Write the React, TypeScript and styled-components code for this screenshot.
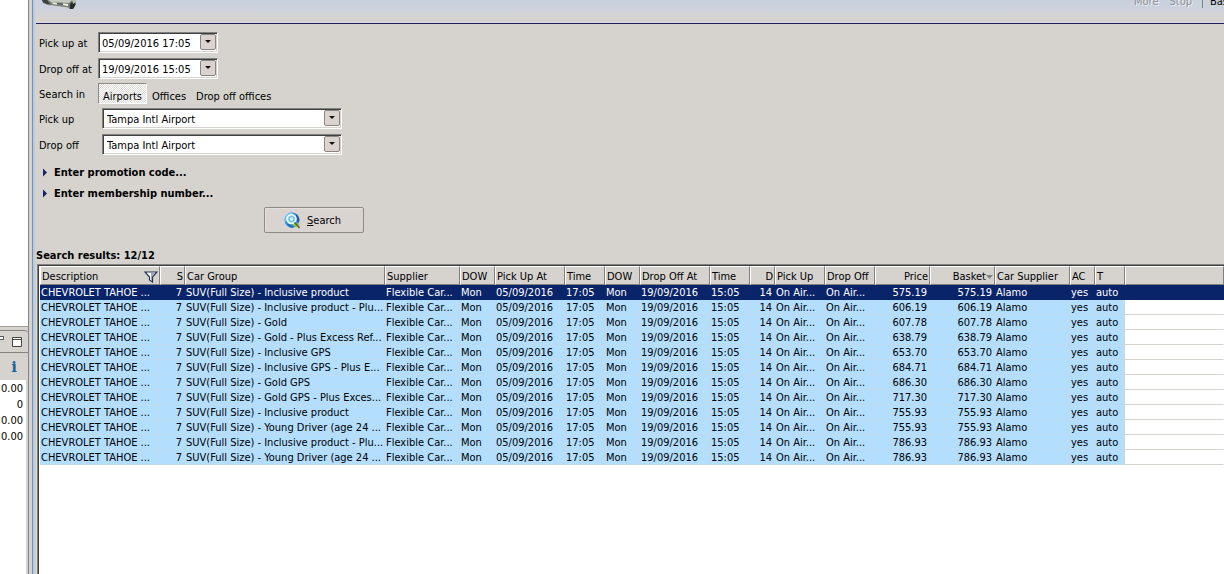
import React from "react";
import styled, { createGlobalStyle } from "styled-components";

const GlobalStyle = createGlobalStyle`
  *, *::before, *::after { box-sizing: border-box; }
  html, body, #root { height: 100%; }
  body {
    margin: 0;
    overflow: hidden;
    background: #d6d3ce;
    color: #000;
    font: 11px/15px "DejaVu Sans Condensed", Tahoma, "DejaVu Sans", sans-serif;
  }
  button, input, select { font: inherit; color: inherit; }
`;

const Shell = styled.div`
  display: flex;
  height: 100%;
  overflow: hidden;
`;

const Sidebar = styled.aside`
  display: flex;
  flex-direction: column;
  flex: 0 0 29px;
  overflow: hidden;
  border-right: 1px solid #858381;
`;

const EmptyView = styled.div`
  flex: 0 0 327px;
  background: #fff;
  border-bottom: 1px solid #a09d99;
`;

const Totals = styled.section`
  display: flex;
  flex-direction: column;
  flex: 1;
  margin-top: 3px;
  border-top: 1px solid #858381;
  border-top-right-radius: 4px;
`;

const SideBar = styled.div<{ $height: number; $ruled?: boolean }>`
  display: flex;
  align-items: center;
  justify-content: flex-end;
  gap: 8px;
  flex: 0 0 ${(p) => p.$height}px;
  padding-right: 6px;
  border-bottom: ${(p) => (p.$ruled ? "1px solid #858381" : "0")};
`;

const PlainIconButton = styled.button`
  display: flex;
  flex: none;
  padding: 0;
  border: 0;
  background: none;
`;

const InfoButton = styled(PlainIconButton)`
  color: #17659c;
  font: bold 15px/18px "DejaVu Serif", "Liberation Serif", serif;
  padding-right: 5px;
`;

const TotalsList = styled.ul`
  flex: 1;
  margin: 0 2px 0 0;
  padding: 1px 3px 0 0;
  list-style: none;
  background: #fff;
  line-height: 16px;
`;

const TotalsItem = styled.li`
  display: flex;
  justify-content: flex-end;
`;

const Main = styled.main`
  display: flex;
  flex-direction: column;
  flex: 1;
  min-width: 0;
  margin-left: 3px;
  border-left: 1px solid #6d93bd;
  box-shadow: inset 2px 0 0 #b9cae2;
  padding-left: 3px;
`;

const Banner = styled.header`
  display: flex;
  justify-content: space-between;
  flex: 0 0 24px;
  overflow: hidden;
  background: linear-gradient(#c9d1de, #cdd2db 45%, #d6d3d1 75%, #d6d3ce);
  border-bottom: 1px solid #1f1d56;
  box-shadow: inset 0 -1px 0 #dcd8e6;
`;

const BannerTools = styled.nav`
  display: flex;
  align-items: flex-start;
  flex: none;
  gap: 11px;
  width: 90px;
  margin-top: -6px;
  white-space: nowrap;
`;

const ToolButton = styled.button`
  flex: none;
  padding: 0;
  border: 0;
  background: none;
  &:disabled {
    color: #8e9095;
    text-shadow: 1px 1px 0 #eef0f4;
  }
`;

const ToolDivider = styled.span`
  flex: none;
  width: 1px;
  height: 14px;
  margin: 0 -4px 0 -1px;
  background: #858381;
`;

const SearchForm = styled.form`
  display: flex;
  flex-direction: column;
  padding: 5px 0 0 3px;
`;

const Field = styled.div<{ $height: number }>`
  display: flex;
  align-items: center;
  height: ${(p) => p.$height}px;
`;

const Label = styled.label`
  flex: 0 0 59px;
  padding-top: 2px;
  white-space: nowrap;
`;

const Sunken = styled.div<{ $width: number; $indent?: number }>`
  display: flex;
  width: ${(p) => p.$width}px;
  height: 21px;
  margin-left: ${(p) => p.$indent ?? 0}px;
  background: #fff;
  border: 1px solid;
  border-color: #808080 #fff #fff #808080;
  box-shadow: inset 1px 1px 0 #404040, inset -1px -1px 0 #d6d3ce;
`;

const TextBox = styled.input`
  flex: 1;
  min-width: 0;
  padding: 2px 0 0 3px;
  border: 0;
  background: none;
  outline: 0;
`;

const Chooser = styled.select`
  flex: 1;
  min-width: 0;
  padding: 2px 0 0 4px;
  border: 0;
  background: none;
  outline: 0;
  appearance: none;
`;

const ArrowButton = styled.button`
  display: flex;
  align-items: center;
  justify-content: center;
  flex: 0 0 16px;
  height: 16px;
  margin: 1px 1px 0 0;
  padding: 0;
  border: 1px solid #8b8581;
  border-radius: 2px;
  background: #dbd3d0;
`;

const Toggle = styled.button<{ $on?: boolean }>`
  height: 21px;
  padding: 5px 4px 0;
  border: 1px solid;
  border-color: ${(p) => (p.$on ? "#8b8987 #fff #fff #8b8987" : "transparent")};
  background: ${(p) =>
    p.$on ? "repeating-conic-gradient(#fff 0 25%, #dedbd7 0 50%) 0 0 / 2px 2px" : "none"};
  white-space: nowrap;
`;

const Expander = styled.button`
  display: flex;
  align-items: center;
  align-self: flex-start;
  gap: 6px;
  height: 21px;
  padding: 0 0 0 3px;
  border: 0;
  background: none;
  font-weight: bold;
`;

const Expanders = styled.div`
  display: flex;
  flex-direction: column;
  padding-top: 5px;
`;

const SubmitButton = styled.button`
  display: flex;
  align-items: center;
  justify-content: center;
  gap: 6px;
  width: 100px;
  height: 26px;
  margin: 3px 0 0 225px;
  padding: 0 3px 0 0;
  border: 1px solid #8f8a87;
  border-radius: 2px;
  background: #dad4d1;
  box-shadow: inset 1px 1px 0 #e6e1de;
`;

const ResultsTitle = styled.h2`
  margin: 15px 0 1px;
  font-size: 11px;
  line-height: 15px;
`;

const ResultsFrame = styled.div`
  flex: 1;
  min-height: 0;
  margin-left: 1px;
  overflow: hidden;
  background: #fff;
  border: solid #808080;
  border-width: 1px 0 0 1px;
  box-shadow: inset 1px 1px 0 #404040;
  padding: 1px 0 0 2px;
`;

const Results = styled.table`
  width: 100%;
  table-layout: fixed;
  border-collapse: separate;
  border-spacing: 0;
`;

const HeadCell = styled.th<{ $right?: boolean }>`
  height: 19px;
  padding: 2px 1px 0;
  overflow: hidden;
  background: #d6d3ce;
  border: 1px solid;
  border-color: #fff #808080 #808080 #fff;
  font-weight: normal;
  line-height: 15px;
  text-align: ${(p) => (p.$right ? "right" : "left")};
  white-space: nowrap;
`;

const HeadContent = styled.span<{ $spread?: boolean; $right?: boolean }>`
  display: flex;
  align-items: center;
  justify-content: ${(p) => (p.$spread ? "space-between" : p.$right ? "flex-end" : "flex-start")};
`;

const Cell = styled.td<{ $right?: boolean; $blank?: boolean }>`
  height: 15px;
  padding: 2px 2px 0 1px;
  overflow: hidden;
  background: ${(p) => (p.$blank ? "#fff" : "#b3defe")};
  border-bottom: 1px solid ${(p) => (p.$blank ? "#d6d3ce" : "#bddaf0")};
  border-right: 1px solid ${(p) => (p.$blank ? "transparent" : "#bddaf0")};
  line-height: 12px;
  text-align: ${(p) => (p.$right ? "right" : "left")};
  white-space: nowrap;
`;

const Row = styled.tr<{ $selected?: boolean }>`
  ${(p) =>
    p.$selected &&
    `color: #fff; & > td { background: #0a246a; border-color: #0a246a; }`}
`;

const DropArrow = () => (
  <svg width="6" height="3" viewBox="0 0 6 3" aria-hidden="true">
    <path d="M0 0h6L3 3z" fill="#111" />
  </svg>
);

const ExpandArrow = () => (
  <svg width="6" height="9" viewBox="0 0 6 9" aria-hidden="true">
    <path d="M1 0.5L5 4.5L1 8.5z" fill="#12246b" />
  </svg>
);

const FilterIcon = () => (
  <svg width="14" height="12" viewBox="0 0 14 12" aria-hidden="true">
    <path d="M1 1h12L8.5 6v5L5.5 9V6z" fill="#fff" stroke="#22324e" strokeWidth="1.2" />
    <path d="M7 2h4L8 5.5v4L7 9z" fill="#9cabc0" />
  </svg>
);

const SortIcon = () => (
  <svg width="7" height="4" viewBox="0 0 7 4" aria-hidden="true">
    <path d="M0 0h7L3.5 4z" fill="#858381" />
  </svg>
);

const MinimizeIcon = () => (
  <svg width="10" height="11" viewBox="0 0 10 11" aria-hidden="true">
    <path d="M0.5 0.5h9v3h-9z" fill="#fff" stroke="#555" />
  </svg>
);

const MaximizeIcon = () => (
  <svg width="10" height="10" viewBox="0 0 10 10" aria-hidden="true">
    <path d="M0.5 0.5h9v9h-9z" fill="#fff" stroke="#444" />
    <path d="M0 2.5h10" stroke="#444" />
  </svg>
);

const CarIcon = () => (
  <svg width="44" height="10" viewBox="0 0 44 10" aria-hidden="true">
    <path d="M6 0h34v5l-2 1-1 3-3 0-2-1-14-2-6-1-5-2z" fill="#777c79" />
    <path d="M6 0h5l3 4-3 0-4-2z" fill="#3a3f40" />
    <path d="M12 0h24l-3 3-18-1z" fill="#c4cabd" />
    <path d="M15 2l17 2v2L16 4z" fill="#a9afa6" />
    <path d="M17 2.5l4 .5v1.5L17 4zM27 3.5l5 .5v2l-5-1z" fill="#eef0d6" />
    <path d="M21 3l6 .5V5l-6-.7z" fill="#4c5254" />
    <path d="M14 5l18 2.5V8.500L15 6z" fill="#d3d6cf" />
    <path d="M34 4l3-3 2 0v5l-2 3h-3z" fill="#25292b" />
    <path d="M36 0h4v2l-3 2z" fill="#b7bda9" />
  </svg>
);

const GlobeSearchIcon = () => (
  <svg width="17" height="17" viewBox="0 0 17 17" aria-hidden="true">
    <circle cx="8" cy="8" r="7.5" fill="#2f8fd8" />
    <path d="M1 6C2 2 6 0 9 1L6 4 3 9 1 10z" fill="#6cc4f2" />
    <path d="M12 2c3 2 4 5 3 8l-3-1-1-4z" fill="#1760b4" />
    <path d="M3 12l4 1 3 3c-3 0-6-1-7-4z" fill="#1c6cbc" />
    <circle cx="7.500" cy="7" r="4.500" fill="#a8dcec" stroke="#f2fbff" strokeWidth="1.600" />
    <circle cx="7.500" cy="7" r="2.500" fill="#c9eef6" stroke="#58b0cf" />
    <path d="M8 13l3-2 5 1-2 3-3-1z" fill="#9ccb3b" />
    <path d="M10.5 10.5L15.5 16" stroke="#4b6a22" strokeWidth="1.6" />
  </svg>
);

type Column = { name: string; width?: number; right?: boolean; mark?: "filter" | "sort" };

const columns: Column[] = [
  { name: "Description", width: 120, mark: "filter" },
  { name: "S", width: 25, right: true },
  { name: "Car Group", width: 200 },
  { name: "Supplier", width: 75 },
  { name: "DOW", width: 35 },
  { name: "Pick Up At", width: 70 },
  { name: "Time", width: 40 },
  { name: "DOW", width: 35 },
  { name: "Drop Off At", width: 70 },
  { name: "Time", width: 40 },
  { name: "D", width: 25, right: true },
  { name: "Pick Up", width: 50 },
  { name: "Drop Off", width: 50 },
  { name: "Price", width: 55, right: true },
  { name: "Basket", width: 65, right: true, mark: "sort" },
  { name: "Car Supplier", width: 75 },
  { name: "AC", width: 25 },
  { name: "T", width: 30 },
  { name: "" },
];

const offers: [string, string][] = [
  ["Inclusive product", "575.19"],
  ["Inclusive product - Plu...", "606.19"],
  ["Gold", "607.78"],
  ["Gold - Plus Excess Ref...", "638.79"],
  ["Inclusive GPS", "653.70"],
  ["Inclusive GPS - Plus E...", "684.71"],
  ["Gold GPS", "686.30"],
  ["Gold GPS - Plus Exces...", "717.30"],
  ["Inclusive product", "755.93"],
  ["Young Driver (age 24 ...", "755.93"],
  ["Inclusive product - Plu...", "786.93"],
  ["Young Driver (age 24 ...", "786.93"],
];

const toCells = ([product, price]: [string, string]) => [
  "CHEVROLET TAHOE ...",
  "7",
  `SUV(Full Size) - ${product}`,
  "Flexible Car...",
  "Mon",
  "05/09/2016",
  "17:05",
  "Mon",
  "19/09/2016",
  "15:05",
  "14",
  "On Air...",
  "On Air...",
  price,
  price,
  "Alamo",
  "yes",
  "auto",
  "",
];

function DateField({ id, label, value }: { id: string; label: string; value: string }) {
  return (
    <Field $height={26}>
      <Label htmlFor={id}>{label}</Label>
      <Sunken $width={120}>
        <TextBox id={id} defaultValue={value} />
        <ArrowButton type="button" aria-label={`Choose ${label}`}>
          <DropArrow />
        </ArrowButton>
      </Sunken>
    </Field>
  );
}

function PlaceField({ id, label }: { id: string; label: string }) {
  return (
    <Field $height={26}>
      <Label htmlFor={id}>{label}</Label>
      <Sunken $width={240} $indent={4}>
        <Chooser id={id}>
          <option>Tampa Intl Airport</option>
        </Chooser>
        <ArrowButton as="span">
          <DropArrow />
        </ArrowButton>
      </Sunken>
    </Field>
  );
}

export default function App() {
  return (
    <>
      <GlobalStyle />
      <Shell>
        <Sidebar>
          <EmptyView />
          <Totals>
            <SideBar $height={22} $ruled>
              <PlainIconButton aria-label="Minimize">
                <MinimizeIcon />
              </PlainIconButton>
              <PlainIconButton aria-label="Maximize">
                <MaximizeIcon />
              </PlainIconButton>
            </SideBar>
            <SideBar $height={27}>
              <InfoButton>i</InfoButton>
            </SideBar>
            <TotalsList>
              {["0.00", "0", "0.00", "0.00"].map((total, i) => (
                <TotalsItem key={i}>{total}</TotalsItem>
              ))}
            </TotalsList>
          </Totals>
        </Sidebar>
        <Main>
          <Banner>
            <CarIcon />
            <BannerTools>
              <ToolButton disabled>More</ToolButton>
              <ToolButton disabled>Stop</ToolButton>
              <ToolDivider />
              <ToolButton>Basket</ToolButton>
            </BannerTools>
          </Banner>
          <SearchForm onSubmit={(e) => e.preventDefault()}>
            <DateField id="pickup-at" label="Pick up at" value="05/09/2016 17:05" />
            <DateField id="dropoff-at" label="Drop off at" value="19/09/2016 15:05" />
            <Field $height={24} role="group" aria-labelledby="search-in">
              <Label as="span" id="search-in">
                Search in
              </Label>
              <Toggle type="button" $on aria-pressed="true">
                Airports
              </Toggle>
              <Toggle type="button">Offices</Toggle>
              <Toggle type="button">Drop off offices</Toggle>
            </Field>
            <PlaceField id="pickup" label="Pick up" />
            <PlaceField id="dropoff" label="Drop off" />
            <Expanders>
              <Expander type="button">
                <ExpandArrow />
                Enter promotion code...
              </Expander>
              <Expander type="button">
                <ExpandArrow />
                Enter membership number...
              </Expander>
            </Expanders>
            <SubmitButton type="submit">
              <GlobeSearchIcon />
              <span>
                <u>S</u>earch
              </span>
            </SubmitButton>
          </SearchForm>
          <ResultsTitle>Search results: 12/12</ResultsTitle>
          <ResultsFrame>
            <Results>
              <colgroup>
                {columns.map((c, i) => (
                  <col key={i} width={c.width} />
                ))}
              </colgroup>
              <thead>
                <tr>
                  {columns.map((c, i) => (
                    <HeadCell key={i} $right={c.right}>
                      <HeadContent $spread={c.mark === "filter"} $right={c.right}>
                        {c.name}
                        {c.mark === "filter" && <FilterIcon />}
                        {c.mark === "sort" && <SortIcon />}
                      </HeadContent>
                    </HeadCell>
                  ))}
                </tr>
              </thead>
              <tbody>
                {offers.map((offer, r) => (
                  <Row key={r} $selected={r === 0}>
                    {toCells(offer).map((text, i) => (
                      <Cell key={i} $right={columns[i].right} $blank={i === columns.length - 1}>
                        {text}
                      </Cell>
                    ))}
                  </Row>
                ))}
              </tbody>
            </Results>
          </ResultsFrame>
        </Main>
      </Shell>
    </>
  );
}
